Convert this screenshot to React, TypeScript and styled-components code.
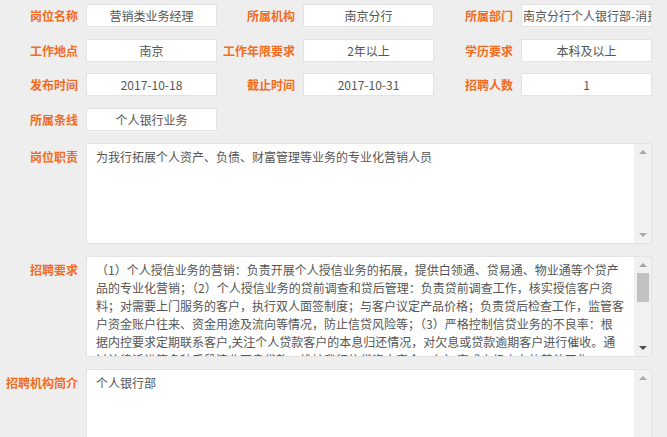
import styled, { createGlobalStyle } from "styled-components";

const GlobalStyle = createGlobalStyle`
  html, body {
    margin: 0;
    padding: 0;
    overflow: hidden;
    background-color: #eeeeee;
  }
  body {
    font-family: "Noto Sans CJK SC", "Microsoft YaHei", sans-serif;
  }
`;

const Page = styled.div`
  width: 667px;
  height: 437px;
  overflow: hidden;
  padding-top: 4px;
  box-sizing: border-box;
  display: flex;
  flex-direction: column;
  gap: 12px;
`;

const FieldGrid = styled.div`
  display: grid;
  grid-template-columns: 86px 131px 86px 131px 87px 131px;
  grid-auto-rows: 23px;
  row-gap: 11.7px;
`;

const Label = styled.div<{ $top?: boolean }>`
  font-size: 12px;
  font-weight: bold;
  color: #f26c22;
  text-align: right;
  padding-right: 8px;
  line-height: 23px;
  white-space: nowrap;
  padding-top: ${(p) => (p.$top ? "2px" : "0")};
`;

const Input = styled.div<{ $left?: boolean }>`
  background-color: #ffffff;
  border: 1px solid #e3e3e3;
  box-sizing: border-box;
  font-size: 12px;
  color: #555555;
  line-height: 21px;
  text-align: ${(p) => (p.$left ? "left" : "center")};
  padding-left: ${(p) => (p.$left ? "1px" : "0")};
  white-space: nowrap;
  overflow: hidden;
`;

const TextRow = styled.div`
  display: grid;
  grid-template-columns: 86px 566px;
`;

const TextBox = styled.div`
  height: 101px;
  background-color: #ffffff;
  border: 1px solid #e3e3e3;
  box-sizing: border-box;
  display: flex;
  flex-shrink: 0;
`;

const TextContent = styled.div`
  flex: 1;
  overflow: hidden;
  padding: 4px 0 0 9px;
  font-size: 12px;
  line-height: 18px;
  color: #555555;
`;

const TextLine = styled.div`
  white-space: nowrap;
`;

const ScrollTrack = styled.div`
  width: 17px;
  background-color: #f1f1f1;
  display: flex;
  flex-direction: column;
  align-items: center;
  padding: 6px 0 6px;
  box-sizing: border-box;
`;

const Arrow = styled.div<{ $down?: boolean; $dim?: boolean }>`
  width: 0;
  height: 0;
  border-left: 4px solid transparent;
  border-right: 4px solid transparent;
  ${(p) =>
    p.$down
      ? `border-top: 4px solid ${p.$dim ? "#a8a8a8" : "#505050"};`
      : `border-bottom: 4px solid ${p.$dim ? "#a8a8a8" : "#a3a3a3"};`}
  margin: 0;
`;

const Thumb = styled.div`
  width: 12px;
  height: 29px;
  background-color: #c1c1c1;
  margin-top: 6px;
`;

const Spacer = styled.div`
  flex: 1;
`;

const Scrollbar = ({ thumb, dim }: { thumb?: boolean; dim?: boolean }) => (
  <ScrollTrack>
    <Arrow $dim={dim} />
    {thumb && <Thumb />}
    <Spacer />
    <Arrow $down $dim={dim} />
  </ScrollTrack>
);

const requirements = [
  "（1）个人授信业务的营销：负责开展个人授信业务的拓展，提供白领通、贷易通、物业通等个贷产",
  "品的专业化营销；（2）个人授信业务的贷前调查和贷后管理：负责贷前调查工作，核实授信客户资",
  "料；对需要上门服务的客户，执行双人面签制度；与客户议定产品价格；负责贷后检查工作，监管客",
  "户资金账户往来、资金用途及流向等情况，防止信贷风险等；（3）严格控制信贷业务的不良率：根",
  "据内控要求定期联系客户,关注个人贷款客户的本息归还情况，对欠息或贷款逾期客户进行催收。通",
  "过法律诉讼等多种手段清收不良贷款，维护我行信贷资产安全；（4）完成上级交办的其他工作。",
];

const App = () => {
  return (
    <>
      <GlobalStyle />
      <Page>
        <FieldGrid>
          <Label>岗位名称</Label>
          <Input>营销类业务经理</Input>
          <Label>所属机构</Label>
          <Input>南京分行</Input>
          <Label>所属部门</Label>
          <Input $left>南京分行个人银行部-消费信贷中心</Input>

          <Label>工作地点</Label>
          <Input>南京</Input>
          <Label>工作年限要求</Label>
          <Input>2年以上</Input>
          <Label>学历要求</Label>
          <Input>本科及以上</Input>

          <Label>发布时间</Label>
          <Input>2017-10-18</Input>
          <Label>截止时间</Label>
          <Input>2017-10-31</Input>
          <Label>招聘人数</Label>
          <Input>1</Input>

          <Label>所属条线</Label>
          <Input>个人银行业务</Input>
        </FieldGrid>

        <TextRow>
          <Label $top>岗位职责</Label>
          <TextBox>
            <TextContent>
              <TextLine>为我行拓展个人资产、负债、财富管理等业务的专业化营销人员</TextLine>
            </TextContent>
            <Scrollbar dim />
          </TextBox>
        </TextRow>

        <TextRow>
          <Label $top>招聘要求</Label>
          <TextBox>
            <TextContent>
              {requirements.map((line, i) => (
                <TextLine key={i}>{line}</TextLine>
              ))}
            </TextContent>
            <Scrollbar thumb />
          </TextBox>
        </TextRow>

        <TextRow>
          <Label $top>招聘机构简介</Label>
          <TextBox>
            <TextContent>
              <TextLine>个人银行部</TextLine>
            </TextContent>
            <Scrollbar dim />
          </TextBox>
        </TextRow>
      </Page>
    </>
  );
};

export default App;
